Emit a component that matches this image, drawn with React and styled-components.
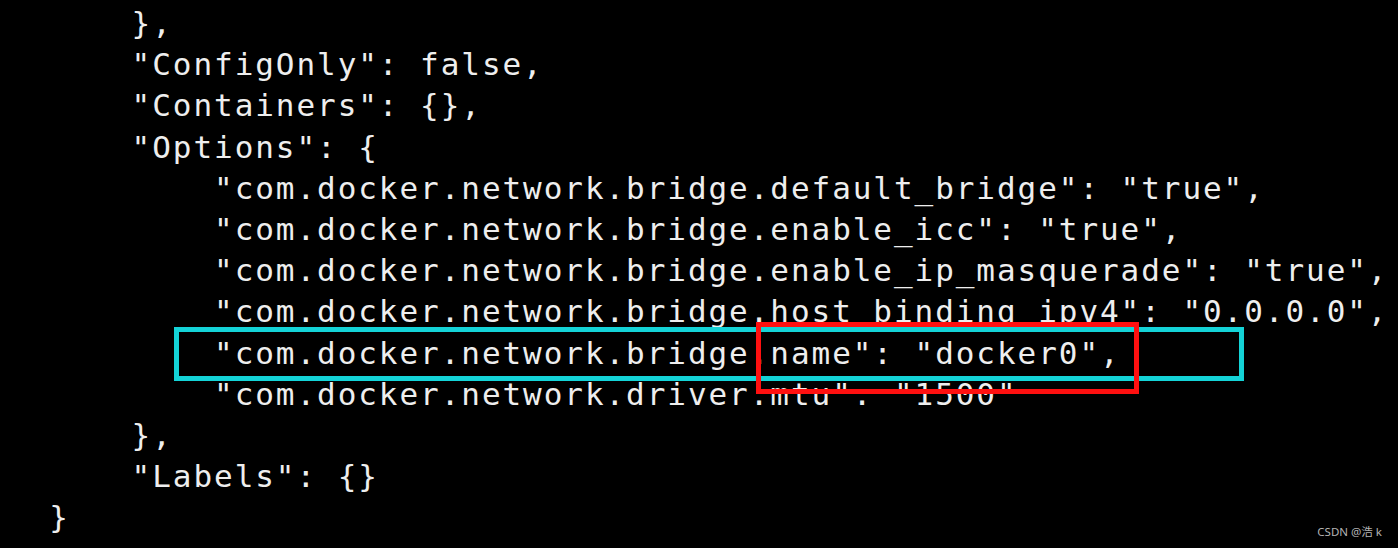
import React from "react";
import styled, { createGlobalStyle } from "styled-components";

const Global = createGlobalStyle`
  html, body { margin: 0; padding: 0; background: #000; }
  #root { width: 1398px; height: 548px; }
`;

const Screen = styled.div`
  position: relative;
  width: 1398px;
  height: 548px;
  background: #000;
  overflow: hidden;
  padding: 3px 0 0 8px;
  box-sizing: border-box;
`;

const Code = styled.pre`
  margin: 0;
  font-family: "DejaVu Sans Mono", "Liberation Mono", monospace;
  font-size: 31px;
  letter-spacing: 1.94px;
  line-height: 41.2px;
  color: #eeeeee;
  white-space: pre;
`;

const Line = styled.div`
  height: 41.2px;
`;

const Box = styled.div`
  position: absolute;
  box-sizing: border-box;
  border: 5px solid ${(p) => p.$color};
  left: ${(p) => p.$x}px;
  top: ${(p) => p.$y}px;
  width: ${(p) => p.$w}px;
  height: ${(p) => p.$h}px;
  pointer-events: none;
`;

const Watermark = styled.div`
  position: absolute;
  right: 16px;
  bottom: 9px;
  font-family: "Noto Sans", "Noto Sans CJK SC", sans-serif;
  font-size: 11.5px;
  color: #b4b4b4;
`;

const lines = [
  `      },`,
  `      "ConfigOnly": false,`,
  `      "Containers": {},`,
  `      "Options": {`,
  `          "com.docker.network.bridge.default_bridge": "true",`,
  `          "com.docker.network.bridge.enable_icc": "true",`,
  `          "com.docker.network.bridge.enable_ip_masquerade": "true",`,
  `          "com.docker.network.bridge.host_binding_ipv4": "0.0.0.0",`,
  `          "com.docker.network.bridge.name": "docker0",`,
  `          "com.docker.network.driver.mtu": "1500"`,
  `      },`,
  `      "Labels": {}`,
  `  }`,
];

export default function App() {
  return (
    <>
      <Global />
      <Screen>
        <Code>
          {lines.map((l, i) => (
            <Line key={i}>{l}</Line>
          ))}
        </Code>
        <Box $color="#14d3d7" $x={174} $y={327} $w={1070} $h={54} />
        <Box $color="#ff1010" $x={756} $y={322} $w={383} $h={72} />
        <Watermark>CSDN @浩 k</Watermark>
      </Screen>
    </>
  );
}
